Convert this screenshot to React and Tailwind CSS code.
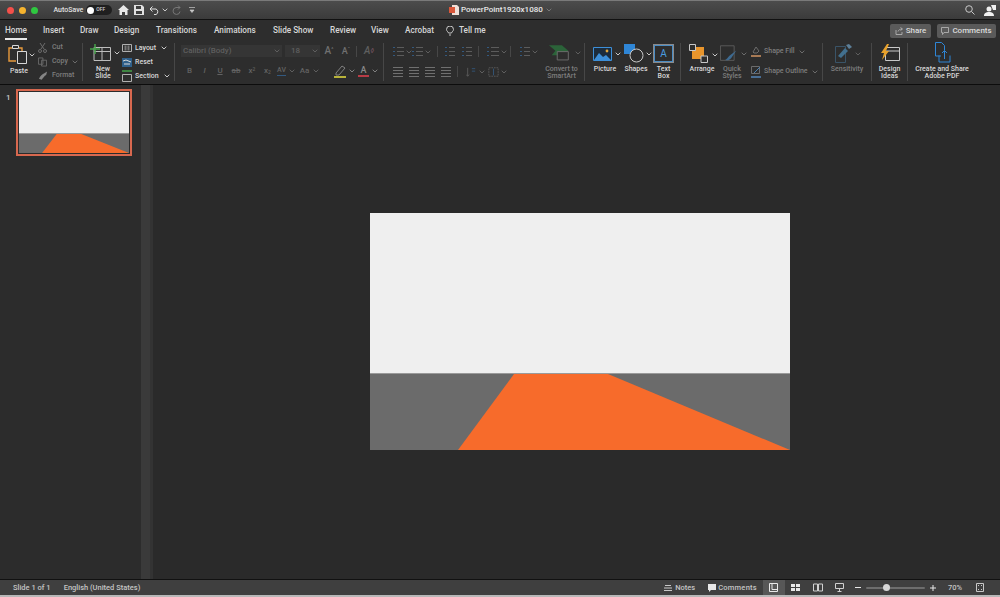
import React from "react";

const Chev = ({ c = "#c8c8c8", className = "" }) => (
  <svg width="6" height="4" viewBox="0 0 6 4" className={`shrink-0 ${className}`}><path d="M.7.7 3 3 5.3.7" fill="none" stroke={c} strokeWidth="1" /></svg>
);

const Lines = ({ c = "#5c5c5c", dots = false, w = 10 }) => (
  <svg width={w} height="11" viewBox={`0 0 ${w} 11`} fill="none" stroke={c} strokeWidth="1" className="shrink-0">
    {dots ? (
      <>
        <path d={`M4 1.5h${w - 4}M4 5.5h${w - 4}M4 9.5h${w - 4}`} />
        <path d="M0 1.5h2M0 5.5h2M0 9.5h2" stroke="#33597f" />
      </>
    ) : (
      <path d={`M0 1.5h${w}M0 4.5h${w}M0 7.5h${w}M0 10.5h${w}`} />
    )}
  </svg>
);

const Tab = ({ children, active, className = "" }) => (
  <div className={`relative text-[8.2px] font-medium text-[#d6d6d6] ${className}`}>
    <span className="relative inline-block">
      {children}
      {active && <span className="absolute left-0 right-0 -bottom-[3px] h-[2px] bg-[#e8e8e8]" />}
    </span>
  </div>
);

const Divider = ({ className = "" }) => <div className={`w-px h-[38px] shrink-0 self-center bg-[#474747] ${className}`} />;

const Label = ({ children, dim, className = "" }) => (
  <div className={`text-[7px] leading-[7px] text-center font-medium whitespace-nowrap ${dim ? "text-[#7d7d7d]" : "text-[#d8d8d8]"} ${className}`}>{children}</div>
);

const Glyph = ({ children, w = "w-[16px]", c = "text-[#626262]", className = "" }) => (
  <div className={`${w} ${c} flex items-center justify-center text-[8px] leading-none font-medium ${className}`}>{children}</div>
);

function PasteGroup() {
  return (
    <div className="w-[82px] shrink-0 flex pl-[8px]">
      <div className="w-[30px] flex flex-col items-start pt-[4px]">
        <div className="flex items-start">
          <svg width="19" height="20" viewBox="0 0 19 20" fill="none">
            <path d="M8 17H1V4h3M11 4h3v3" stroke="#e89a3c" strokeWidth="1.4" />
            <path d="M4.500 1.500h6v3h-6z" stroke="#d8d8d8" strokeWidth="1" />
            <path d="M9.500 7.500h9v12h-9z" fill="#2d2d2d" stroke="#d8d8d8" strokeWidth="1" />
          </svg>
          <Chev className="mt-[9px] ml-[2px]" />
        </div>
        <Label className="mt-[4px] w-[22px]">Paste</Label>
      </div>
      <div className="flex flex-col pt-[3px] gap-[5px]">
        <div className="flex items-center gap-[4px] h-[9px]">
          <svg width="9" height="10" viewBox="0 0 9 10" fill="none" stroke="#6c6c6c" strokeWidth="1"><path d="M2 0l4 6M7 0L3 6" /><circle cx="2" cy="8" r="1.500" /><circle cx="7" cy="8" r="1.500" /></svg>
          <Label dim className="ml-[1px]">Cut</Label>
        </div>
        <div className="flex items-center gap-[4px] h-[9px]">
          <svg width="9" height="10" viewBox="0 0 10 10" fill="none" stroke="#6c6c6c" strokeWidth="1"><path d="M.5.5h5v7h-5zM4 3h5.500v6.500H4z" /></svg>
          <Label dim className="ml-[1px]">Copy</Label>
          <Chev c="#6c6c6c" />
        </div>
        <div className="flex items-center gap-[4px] h-[9px]">
          <svg width="10" height="10" viewBox="0 0 11 10"><path d="M1 8c2-4 4-5 6-6l3-2-1 4c-2 1-3 3-5 5z" fill="#858585" /></svg>
          <Label dim>Format</Label>
        </div>
      </div>
    </div>
  );
}

function SlideGroup() {
  return (
    <div className="w-[91px] shrink-0 flex pl-[7px]">
      <div className="w-[32px] flex flex-col items-start pt-[4px]">
        <div className="flex items-center">
          <svg width="21" height="18" viewBox="0 0 21 18" fill="none">
            <path d="M4 3.500h16.500v13H4z" stroke="#bdbdbd" strokeWidth="1" />
            <path d="M12 3.500v13M4 7.500h16.500" stroke="#bdbdbd" strokeWidth="1" />
            <path d="M5 0v10M0 5h10" stroke="#45a34a" strokeWidth="1.500" />
          </svg>
          <Chev className="ml-[3px]" />
        </div>
        <Label className="mt-[4px] w-[26px]">New<br />Slide</Label>
      </div>
      <div className="flex flex-col pt-[3px] gap-[4px]">
        <div className="flex items-center gap-[3px] h-[10px]">
          <svg width="10" height="8" viewBox="0 0 10 8" fill="none" stroke="#b0b0b0"><path d="M.5.5h9v7h-9z" /><path d="M3.500 1.500v5M6.500 1.500v5" stroke="#777" strokeWidth="2" /></svg>
          <Label>Layout</Label>
          <Chev className="ml-[2px]" />
        </div>
        <div className="flex items-center gap-[3px] h-[10px]">
          <svg width="10" height="9" viewBox="0 0 10 9"><path d="M0 0h10v9H0z" fill="#2f5f8a" /><path d="M1 3l3-1 5 2M2 6h6" stroke="#d8d8d8" fill="none" /></svg>
          <Label>Reset</Label>
        </div>
        <div className="flex items-center gap-[3px] h-[10px]">
          <svg width="10" height="12" viewBox="0 0 10 12" fill="none"><path d="M0 1h10" stroke="#45a34a" strokeWidth="1.500" /><path d="M.5 4.500h9v7h-9z" stroke="#b0b0b0" /></svg>
          <Label>Section</Label>
          <Chev className="ml-[2px]" />
        </div>
      </div>
    </div>
  );
}

function FontGroup() {
  return (
    <div className="w-[208px] shrink-0 flex flex-col pl-[6px] pt-[5px]">
      <div className="flex items-center h-[12px]">
        <div className="w-[101px] h-[12px] bg-[#353535] flex items-center justify-between pl-[2px] pr-[2px]">
          <span className="text-[8px] text-[#5f5f5f] font-medium">Calibri (Body)</span>
          <Chev c="#5f5f5f" />
        </div>
        <div className="w-[35px] h-[12px] ml-[3px] bg-[#353535] flex items-center justify-between pl-[6px] pr-[2px]">
          <span className="text-[8px] text-[#5f5f5f] font-medium">18</span>
          <Chev c="#5f5f5f" />
        </div>
        <Glyph w="w-[14px]" c="text-[#707070]" className="ml-[2px] text-[10px]">A<span className="text-[5px] -mt-[4px]">^</span></Glyph>
        <Glyph w="w-[16px]" c="text-[#707070]" className="ml-[2px] text-[9px]">A<span className="text-[5px] -mt-[4px]">ˇ</span></Glyph>
        <div className="w-px h-[11px] bg-[#474747] ml-[2px]" />
        <Glyph w="w-[24px]" c="text-[#5f5f5f]" className="text-[10px] italic">A<span className="text-[#6d4f5c] text-[7px]">◊</span></Glyph>
      </div>
      <div className="flex items-center h-[12px] mt-[8px] pl-[1px]">
        <Glyph w="w-[15px]" className="font-bold">B</Glyph>
        <Glyph w="w-[15px]" className="italic">I</Glyph>
        <Glyph w="w-[16px]" className="underline">U</Glyph>
        <Glyph w="w-[16px]" className="line-through">ab</Glyph>
        <Glyph w="w-[16px]">x<sup className="text-[5px]">2</sup></Glyph>
        <Glyph w="w-[15px]">x<sub className="text-[5px]">2</sub></Glyph>
        <div className="w-[13px] flex flex-col items-center">
          <span className="text-[7px] leading-[7px] text-[#626262] font-medium">AV</span>
          <div className="w-[9px] h-px mt-[1px] bg-[#33597f]" />
        </div>
        <Chev c="#5f5f5f" className="ml-[1px]" />
        <Glyph w="w-[17px]" className="ml-[1px]">Aa</Glyph>
        <Chev c="#5f5f5f" />
        <div className="w-[15px]" />
        <svg width="13" height="13" viewBox="0 0 13 13"><path d="M2 8l6-7 3 2-6 7H2z" fill="none" stroke="#808080" /><path d="M0 11h12v2H0z" fill="#b8b33a" /></svg>
        <Chev c="#808080" className="ml-[2px]" />
        <div className="w-[3px]" />
        <div className="w-[11px] flex flex-col items-center">
          <span className="text-[9px] leading-[9px] text-[#8a8a8a] font-medium">A</span>
          <div className="w-[11px] h-[2px] bg-[#b83c46]" />
        </div>
        <Chev c="#808080" className="ml-[3px]" />
      </div>
    </div>
  );
}

const VBar = ({ className = "" }) => <div className={`w-px h-[11px] shrink-0 bg-[#474747] ${className}`} />;

function ParagraphGroup() {
  return (
    <div className="w-[200px] shrink-0 flex">
      <div className="w-[155px] flex flex-col pl-[9px] pt-[6px]">
        <div className="flex items-center h-[11px]">
          <Lines dots w={11} />
          <Chev c="#5f5f5f" className="ml-[2px]" />
          <Lines dots w={11} />
          <Chev c="#5f5f5f" className="ml-[2px]" />
          <VBar className="ml-[6px]" />
          <div className="w-[7px]" />
          <Lines dots />
          <div className="w-[7px]" />
          <Lines dots />
          <VBar className="ml-[6px]" />
          <div className="w-[8px]" />
          <Lines dots w={12} />
          <Chev c="#5f5f5f" className="ml-[2px]" />
          <VBar className="ml-[3px]" />
          <div className="w-[9px]" />
          <Lines dots />
          <Chev c="#5f5f5f" className="ml-[2px]" />
        </div>
        <div className="flex items-center h-[11px] mt-[9px]">
          <Lines c="#707070" />
          <div className="w-[6px]" />
          <Lines c="#707070" />
          <div className="w-[6px]" />
          <Lines c="#707070" />
          <div className="w-[6px]" />
          <Lines c="#707070" />
          <VBar className="ml-[6px]" />
          <div className="w-[8px]" />
          <svg width="10" height="12" viewBox="0 0 12 12" fill="none" stroke="#5f5f5f"><path d="M2 1v10M0 9l2 2 2-2" /><path d="M7 2h4M7 5h4" stroke="#33597f" /></svg>
          <Chev c="#5f5f5f" className="ml-[3px]" />
          <div className="w-[3px]" />
          <svg width="11" height="12" viewBox="0 0 13 12" fill="none" stroke="#5f5f5f"><path d="M1 1h11v10H1z" strokeDasharray="2 1" /><path d="M6.500 2v8" stroke="#33597f" /></svg>
          <Chev c="#5f5f5f" className="ml-[2px]" />
        </div>
      </div>
      <div className="w-[45px] flex flex-col items-center pt-[4px]">
        <div className="flex items-center ml-[6px]">
          <svg width="24" height="18" viewBox="0 0 26 19"><path d="M1 1h14l7 6-7 5H4l4-5z" fill="#2b6339" /><path d="M10 8h12v9H10z" fill="#2d2d2d" stroke="#707070" /></svg>
          <Chev c="#5f5f5f" className="ml-[3px]" />
        </div>
        <Label dim className="mt-[4px]">Convert to<br />SmartArt</Label>
      </div>
    </div>
  );
}

function InsertGroup() {
  return (
    <div className="w-[95px] shrink-0 flex pl-[8px] pt-[4px]">
      <div className="w-[31px] shrink-0 flex flex-col items-start">
        <div className="flex items-center h-[19px]">
          <svg width="19" height="14" viewBox="0 0 19 14"><path d="M.5.5h18v13H.5z" fill="#1c2c3c" stroke="#3d8fd8" /><path d="M1 13l5-7 4 4 3-2 5 5z" fill="#3d8fd8" /><circle cx="14" cy="4" r="1.400" fill="#e0a53c" /></svg>
          <Chev className="ml-[3px]" />
        </div>
        <Label className="mt-[3px] w-[24px]">Picture</Label>
      </div>
      <div className="w-[30px] shrink-0 flex flex-col items-start">
        <div className="flex items-center h-[19px]">
          <svg width="20" height="19" viewBox="0 0 20 19"><path d="M0 0h11v10H0z" fill="#2f86d6" /><circle cx="12.500" cy="11.500" r="6.500" fill="#2d2d2d" stroke="#c8c8c8" /></svg>
          <Chev className="ml-[2px]" />
        </div>
        <Label className="mt-[3px] w-[24px]">Shapes</Label>
      </div>
      <div className="flex flex-col items-center w-[19px] shrink-0">
        <div className="w-[19px] h-[17px] mt-[1px] border border-[#4a8cc4] outline outline-[1px] outline-[#8a8a8a] flex items-center justify-center text-[#4a9de0] text-[10px] leading-none">A</div>
        <Label className="mt-[4px]">Text<br />Box</Label>
      </div>
    </div>
  );
}

function ArrangeGroup() {
  return (
    <div className="w-[141px] shrink-0 flex pl-[8px] pt-[4px]">
      <div className="w-[31px] shrink-0 flex flex-col items-start">
        <div className="flex items-center h-[19px]">
          <svg width="19" height="19" viewBox="0 0 19 19"><path d="M3 3h12v12H3z" fill="#e8952c" /><path d="M.5.5h6v6h-6zM12 12h6.500v6.500H12z" fill="#2d2d2d" stroke="#c8c8c8" /></svg>
          <Chev className="ml-[4px] mt-[2px]" />
        </div>
        <Label className="mt-[3px] w-[26px]">Arrange</Label>
      </div>
      <div className="w-[31px] shrink-0 flex flex-col items-start">
        <div className="flex items-center h-[19px]">
          <svg width="18" height="19" viewBox="0 0 21 19" fill="none"><path d="M.5.5h16v17H.5z" stroke="#606060" /><path d="M6 17c2-1 3-3 5-5l8-6-6 9c-2 2-4 3-7 2z" fill="#3e6a90" /></svg>
          <Chev c="#6c6c6c" className="ml-[3px]" />
        </div>
        <Label dim className="mt-[3px] w-[24px]">Quick<br />Styles</Label>
      </div>
      <div className="flex flex-col pt-[2px] gap-[9px]">
        <div className="flex items-center h-[11px]">
          <svg width="11" height="11" viewBox="0 0 11 11"><path d="M2 6l3-5 3 4-2 2H3z" fill="none" stroke="#6c6c6c" /><path d="M0 9h10v2H0z" fill="#a87a55" /></svg>
          <Label dim className="ml-[2px]">Shape Fill</Label>
          <Chev c="#6c6c6c" className="ml-[4px]" />
        </div>
        <div className="flex items-center h-[11px]">
          <svg width="11" height="12" viewBox="0 0 11 12" fill="none"><path d="M.5.5h8v7h-8z" stroke="#6c6c6c" /><path d="M3 7l6-6" stroke="#4a7fb0" /><path d="M0 10h10v2H0z" fill="#4a6f95" /></svg>
          <Label dim className="ml-[2px]">Shape Outline</Label>
          <Chev c="#6c6c6c" className="ml-[4px]" />
        </div>
      </div>
    </div>
  );
}

function BigGroup() {
  return (
    <>
      <div className="w-[48px] shrink-0 flex flex-col items-center pt-[4px]">
        <div className="flex items-center h-[19px] ml-[2px]">
          <svg width="17" height="19" viewBox="0 0 17 19" fill="none"><path d="M.5 2.500h10v16H.5z" stroke="#3a5468" /><path d="M3 12l7-8 3 3-7 7z" fill="#42708f" /><path d="M11 1l3-1 3 3-3 2z" fill="#5d7f98" /></svg>
          <Chev c="#5f5f5f" className="ml-[3px]" />
        </div>
        <Label dim className="mt-[3px]">Sensitivity</Label>
      </div>
      <Divider />
      <div className="w-[35px] shrink-0 flex flex-col items-center pt-[4px]">
        <svg width="20" height="19" viewBox="0 0 20 19" fill="none"><path d="M5.500 3.500h14v13h-14zM5.500 7h14" stroke="#c8c8c8" /><path d="M7 0L1 9h3l-2 7 7-9H6l3-7z" fill="#e8a22c" /></svg>
        <Label className="mt-[3px]">Design<br />Ideas</Label>
      </div>
      <Divider />
      <div className="w-[68px] shrink-0 flex flex-col items-center pt-[2px]">
        <svg width="17" height="21" viewBox="0 0 17 21" fill="none" stroke="#2f86d6" strokeWidth="1"><path d="M7 14H1.500V.5h6l3 3v5" /><path d="M5 13.500v6.500h11v-6.500M10.500 17v-8M8 11l2.500-2.500L13 11" /></svg>
        <Label className="mt-[3px]">Create and Share<br />Adobe PDF</Label>
      </div>
    </>
  );
}

function TitleBar() {
  return (
    <div className="h-[20px] flex items-center relative bg-gradient-to-b from-[#4c4c4c] to-[#3b3b3b] border-t border-t-[#7a7a7a] border-b border-b-[#111]">
      <div className="flex items-center gap-[5px] pl-[6.500px]">
        <div className="w-[7px] h-[7px] rounded-full bg-[#f4504a]" />
        <div className="w-[7px] h-[7px] rounded-full bg-[#f5b32e]" />
        <div className="w-[7px] h-[7px] rounded-full bg-[#2fc840]" />
      </div>
      <span className="ml-[16px] text-[7px] text-[#e0e0e0] font-medium">AutoSave</span>
      <div className="ml-[3px] w-[26px] h-[10px] rounded-full bg-[#1f1f1f] flex items-center pl-[1px]">
        <div className="w-[7px] h-[7px] rounded-full bg-white" />
        <span className="ml-[2px] text-[5px] text-[#d0d0d0] font-medium">OFF</span>
      </div>
      <svg className="ml-[5.500px]" width="11" height="10" viewBox="0 0 11 10"><path d="M5.500 0L0 5h1.500v5H4V7h3v3h2.500V5H11z" fill="#e8e8e8" /></svg>
      <svg className="ml-[5px]" width="10" height="10" viewBox="0 0 10 10"><path d="M0 0h8l2 2v8H0z" fill="#e0e0e0" /><path d="M2 1h5v3H2zM2 6h6v3H2z" fill="#3f3f3f" /></svg>
      <svg className="ml-[5px]" width="11" height="9" viewBox="0 0 11 9" fill="none" stroke="#e0e0e0"><path d="M3.500.5L1 3l2.500 2.500M1 3h6a3 3 0 0 1 0 5.500H5" /></svg>
      <Chev className="ml-[2px]" />
      <svg className="ml-[4px]" width="10" height="10" viewBox="0 0 10 10" fill="none" stroke="#777"><path d="M6 .5L8 2.500 6 4.500M8 2.500H4a3.500 3.500 0 1 0 4 4" /></svg>
      <svg className="ml-[7px]" width="6" height="6" viewBox="0 0 6 6"><path d="M0 .5h6M1 3h4L3 5.500z" stroke="#c8c8c8" strokeWidth="0.7" fill="#c8c8c8" /></svg>
      <div className="absolute left-[449px] top-[3px] flex items-center">
        <svg width="10" height="10" viewBox="0 0 10 10"><path d="M3 0h5l2 2v8H3z" fill="#f0e0d8" /><path d="M0 2h6v6H0z" fill="#d9573a" /></svg>
        <span className="ml-[2px] text-[8px] leading-[11px] text-[#e8e8e8] font-medium">PowerPoint1920x1080</span>
        <Chev c="#777" className="ml-[3px]" />
      </div>
      <div className="ml-auto flex items-center pr-[4px]">
        <svg width="10" height="10" viewBox="0 0 10 10" fill="none" stroke="#c8c8c8"><circle cx="4" cy="4" r="3.300" /><path d="M6.500 6.500 9.500 9.500" /></svg>
        <svg className="ml-[9px]" width="12" height="11" viewBox="0 0 12 11"><circle cx="5" cy="4" r="2.500" fill="#f0f0f0" /><path d="M0 11c0-3 2-4 5-4s5 1 5 4zM7 0h5v5H9z" fill="#f0f0f0" /></svg>
      </div>
    </div>
  );
}

function TabRow() {
  return (
    <div className="h-[20px] flex items-center bg-[#2d2d2d] pl-[5px] pt-[1px]">
      <Tab active className="w-[38px]">Home</Tab>
      <Tab className="w-[37px]">Insert</Tab>
      <Tab className="w-[34px]">Draw</Tab>
      <Tab className="w-[42px]">Design</Tab>
      <Tab className="w-[58px]">Transitions</Tab>
      <Tab className="w-[59px]">Animations</Tab>
      <Tab className="w-[57px]">Slide Show</Tab>
      <Tab className="w-[41px]">Review</Tab>
      <Tab className="w-[34px]">View</Tab>
      <Tab className="w-[41px]">Acrobat</Tab>
      <svg width="8" height="10" viewBox="0 0 8 10" fill="none" stroke="#c8c8c8"><path d="M2.500 7C2 5.500.5 5 .5 3.500a3.500 3.500 0 0 1 7 0C7.500 5 6 5.500 5.500 7zM3 9h2" /></svg>
      <Tab className="ml-[5px]">Tell me</Tab>
      <div className="ml-auto flex items-center gap-[6px] pr-[4px]">
        <div className="w-[41px] h-[14px] bg-[#5a5a5a] rounded-[2px] flex items-center justify-center gap-[3px] text-[8px] text-[#dcdcdc] font-medium">
          <svg width="8" height="8" viewBox="0 0 8 8" fill="none" stroke="#bbb" strokeWidth="0.8"><path d="M1 3v4.500h6V5M3 4.500C3.500 3 5 2 7 2M5.500.5 7.500 2l-2 1.500" /></svg>
          Share
        </div>
        <div className="w-[59px] h-[14px] bg-[#5a5a5a] rounded-[2px] flex items-center justify-center gap-[3px] text-[8px] text-[#dcdcdc] font-medium">
          <svg width="8" height="8" viewBox="0 0 8 8" fill="none" stroke="#bbb" strokeWidth="0.8"><path d="M.5.5h7v5H3L1.500 7.500v-2h-1z" /></svg>
          Comments
        </div>
      </div>
    </div>
  );
}

function Ribbon() {
  return (
    <div className="h-[45px] flex bg-[#2d2d2d] border-b border-[#0c0c0c]">
      <PasteGroup />
      <Divider />
      <SlideGroup />
      <Divider />
      <FontGroup />
      <Divider />
      <ParagraphGroup />
      <Divider />
      <InsertGroup />
      <Divider />
      <ArrangeGroup />
      <Divider />
      <BigGroup />
    </div>
  );
}

const SlideArt = ({ split }) => (
  <div className="flex flex-col w-full h-full">
    <div className="bg-[#efefef] border-b border-[#9a9a9a] shrink-0" style={{ height: split }} />
    <svg className="flex-1 min-h-0 block bg-[#6b6b6b] w-full" viewBox="0 0 420 77" preserveAspectRatio="none">
      <polygon points="144,0 238,0 420,77 88,77" fill="#f76b2b" />
    </svg>
  </div>
);

function Sidebar() {
  return (
    <div className="w-[141px] shrink-0 bg-[#2c2c2c] flex items-start pt-[4px]">
      <span className="w-[16px] pl-[6px] pt-[2px] text-[8px] leading-[14px] text-[#c8c8c8] font-medium">1</span>
      <div className="w-[116px] h-[67px] border-2 border-[#d8684f] p-px">
        <SlideArt split={42} />
      </div>
    </div>
  );
}

function StatusText({ children, className = "" }) {
  return <span className={`text-[7.500px] text-[#c4c4c4] font-medium whitespace-nowrap ${className}`}>{children}</span>;
}

function StatusBar() {
  return (
    <div className="h-[16px] shrink-0 flex items-center bg-[#3f3f3f] border-t border-[#111]">
      <StatusText className="ml-[13px]">Slide 1 of 1</StatusText>
      <StatusText className="ml-[13px]">English (United States)</StatusText>
      <div className="ml-auto flex items-center h-full">
        <svg width="8" height="8" viewBox="0 0 8 8" stroke="#c8c8c8"><path d="M1 1.500h6M0 4h8M0 6.500h8" /></svg>
        <StatusText className="ml-[3px]">Notes</StatusText>
        <svg className="ml-[13px]" width="8" height="8" viewBox="0 0 8 8"><path d="M0 0h8v6H3L1 8V6H0z" fill="#e8e8e8" /></svg>
        <StatusText className="ml-[2px] tracking-[0.25px]">Comments</StatusText>
        <div className="ml-[6px] w-[22px] h-full bg-[#575757] flex items-center justify-center">
          <svg width="9" height="9" viewBox="0 0 9 9" fill="none" stroke="#e8e8e8"><path d="M.5.5h8v8h-8zM3 .5v6h5.500" /></svg>
        </div>
        <div className="w-[22px] flex justify-center">
          <svg width="9" height="7" viewBox="0 0 9 7" fill="#e8e8e8"><path d="M0 0h4v3H0zM5 0h4v3H5zM0 4h4v3H0zM5 4h4v3H5z" /></svg>
        </div>
        <div className="w-[22px] flex justify-center">
          <svg width="10" height="9" viewBox="0 0 10 9" fill="none" stroke="#d0d0d0"><path d="M.5 1h4v7h-4zM5.500 1h4v7h-4z" /></svg>
        </div>
        <div className="w-[22px] flex justify-center">
          <svg width="9" height="9" viewBox="0 0 9 9" fill="none" stroke="#d0d0d0"><path d="M.5.5h8v5h-8zM4.500 5.500v3M2.500 8.500h4" /></svg>
        </div>
        <div className="ml-[4px] w-[6px] h-px bg-[#e8e8e8]" />
        <div className="ml-[5px] w-[59px] h-[2px] bg-[#6d6d6d] rounded relative">
          <div className="absolute left-[17px] -top-[2.500px] w-[7px] h-[7px] rounded-full bg-[#d8d8d8]" />
        </div>
        <svg className="ml-[5px]" width="6" height="6" viewBox="0 0 6 6" stroke="#e8e8e8"><path d="M0 3h6M3 0v6" /></svg>
        <StatusText className="ml-[12px]">70%</StatusText>
        <svg className="ml-[14px] mr-[16px]" width="8" height="9" viewBox="0 0 8 9" fill="none" stroke="#c8c8c8"><path d="M.5.5h7v8h-7z" /><path d="M2 3l1-1M6 3L5 2M2 6l1 1M6 6L5 7" /></svg>
      </div>
    </div>
  );
}

export default function App() {
  return (
    <div className="w-[1000px] h-[597px] flex flex-col overflow-hidden bg-[#2a2a2a] font-['Roboto','Liberation_Sans',sans-serif]">
      <TitleBar />
      <TabRow />
      <Ribbon />
      <div className="flex-1 flex min-h-0">
        <Sidebar />
        <div className="w-[9px] shrink-0 bg-[#3a3a3a]" />
        <div className="w-[3px] shrink-0 bg-[#333333]" />
        <div className="flex-1 flex items-center justify-center bg-[#2a2a2a] pl-[7px] pb-[1px]">
          <div className="w-[420px] h-[237px]">
            <SlideArt split={161} />
          </div>
        </div>
      </div>
      <StatusBar />
      <div className="h-[2px] shrink-0 bg-[#b8b8b8]" />
    </div>
  );
}
